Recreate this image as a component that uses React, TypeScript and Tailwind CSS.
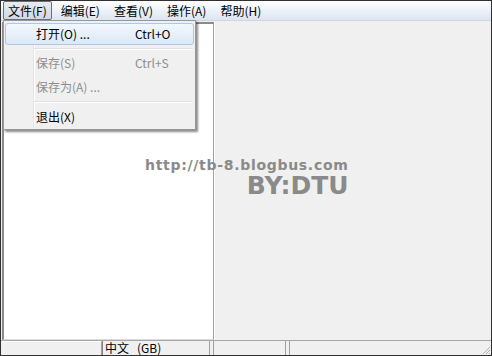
import React from "react";

// Win7-style window: menu bar, open file menu, list pane and status bar

const font = { fontFamily: '"Noto Sans CJK SC", "Liberation Sans", sans-serif' };

const menus = ["文件(F)", "编辑(E)", "查看(V)", "操作(A)", "帮助(H)"];

function MenuRow({ label, shortcut, disabled, active }: { label: string; shortcut?: string; disabled?: boolean; active?: boolean }) {
  return (
    <div
      className={`mx-[1px] h-[22px] flex items-center rounded-[3px] border ${
        active ? "border-[#a8c8ee] bg-gradient-to-b from-[#f2f7fd] to-[#dde9f8]" : "border-transparent"
      } ${disabled ? "text-[#8d8d8d]" : "text-black"}`}
    >
      <div className="w-[30px] shrink-0" />
      <div className="flex-1">{label}</div>
      <div className="w-[58px] shrink-0">{shortcut}</div>
    </div>
  );
}

function Separator({ h }: { h: string }) {
  return (
    <div className={`${h} flex items-center pl-[30px] pr-[2px]`}>
      <div className="w-full border-t border-[#e0e0e0] border-b border-b-white" />
    </div>
  );
}

export default function App() {
  return (
    <div className="w-[492px] h-[356px] border border-[#303030] bg-[#f0f0f0] flex flex-col relative overflow-hidden text-[12px]" style={font}>
      {/* menu bar */}
      <div className="h-[20px] flex items-center bg-gradient-to-b from-white to-[#dce5f1] border-b border-[#cdd6e2] pl-[2px] shrink-0">
        {menus.map((m, i) => (
          <div
            key={m}
            className={`h-[19px] flex items-center px-[4px] mr-[4px] rounded-[2px] border ${
              i === 0 ? "border-[#6e6e6e] bg-gradient-to-b from-[#e8ecf1] to-[#cfd8e4]" : "border-transparent"
            }`}
          >
            {m}
          </div>
        ))}
      </div>

      {/* body */}
      <div className="flex-1 flex pt-[1px] pl-[1px] pr-[1px]">
        <div className="w-[212px] bg-white border-l-2 border-t-2 border-[#8a8a8a] border-r border-r-[#a0a0a0] border-b border-b-[#dcdcdc]" />
        <div className="flex-1 border-l border-white" />
      </div>

      {/* status bar */}
      <div className="h-[15px] flex text-[12px] leading-[13px] border-t border-[#a7a7a7] shrink-0 pl-[1px]">
        <div className="w-[100px] border-t border-white border-r border-r-[#a0a0a0]" />
        <div className="w-[108px] border-l border-[#808080] border-r border-r-[#a0a0a0] pl-[2px] flex">
          <span>中文</span>
          <span className="ml-[8px]">(GB)</span>
        </div>
        <div className="w-[3px]" />
        <div className="w-[73px] border-l border-[#a0a0a0] border-r border-r-[#a0a0a0]" />
        <div className="w-[3px]" />
        <div className="flex-1 border-l border-[#a0a0a0] relative">
          <svg className="absolute right-0 bottom-0" width="10" height="10" viewBox="0 0 10 10">
            <path d="M9 2 L2 9 M9 5 L5 9 M9 8 L8 9" stroke="#b0b0b0" strokeWidth="1" />
          </svg>
        </div>
      </div>

      {/* dropdown menu */}
      <div className="absolute left-[2px] top-[19px] w-[193px] bg-[#f0f0f0] border border-[#979797] shadow-[2px_2px_2px_rgba(0,0,0,0.45)] pt-[2px] pb-[1px]">
        <div className="absolute left-[29px] top-[2px] bottom-[2px] border-l border-[#e2e3e3] border-r border-r-white" />
        <div className="relative">
          <MenuRow label="打开(O) ..." shortcut="Ctrl+O" active />
          <Separator h="h-[7px]" />
          <MenuRow label="保存(S)" shortcut="Ctrl+S" disabled />
          <div className="h-[2px]" />
          <MenuRow label="保存为(A) ..." disabled />
          <Separator h="h-[8px]" />
          <MenuRow label="退出(X)" />
        </div>
      </div>

      {/* watermark */}
      <div className="absolute left-[144px] top-[157px] flex flex-col items-end text-[#8a8a8a] font-bold leading-none" style={{ fontFamily: '"DejaVu Sans", sans-serif' }}>
        <div className="text-[14px] tracking-[0.7px]">http://tb-8.blogbus.com</div>
        <div className="text-[25px] mt-[1px]">BY:DTU</div>
      </div>
    </div>
  );
}
